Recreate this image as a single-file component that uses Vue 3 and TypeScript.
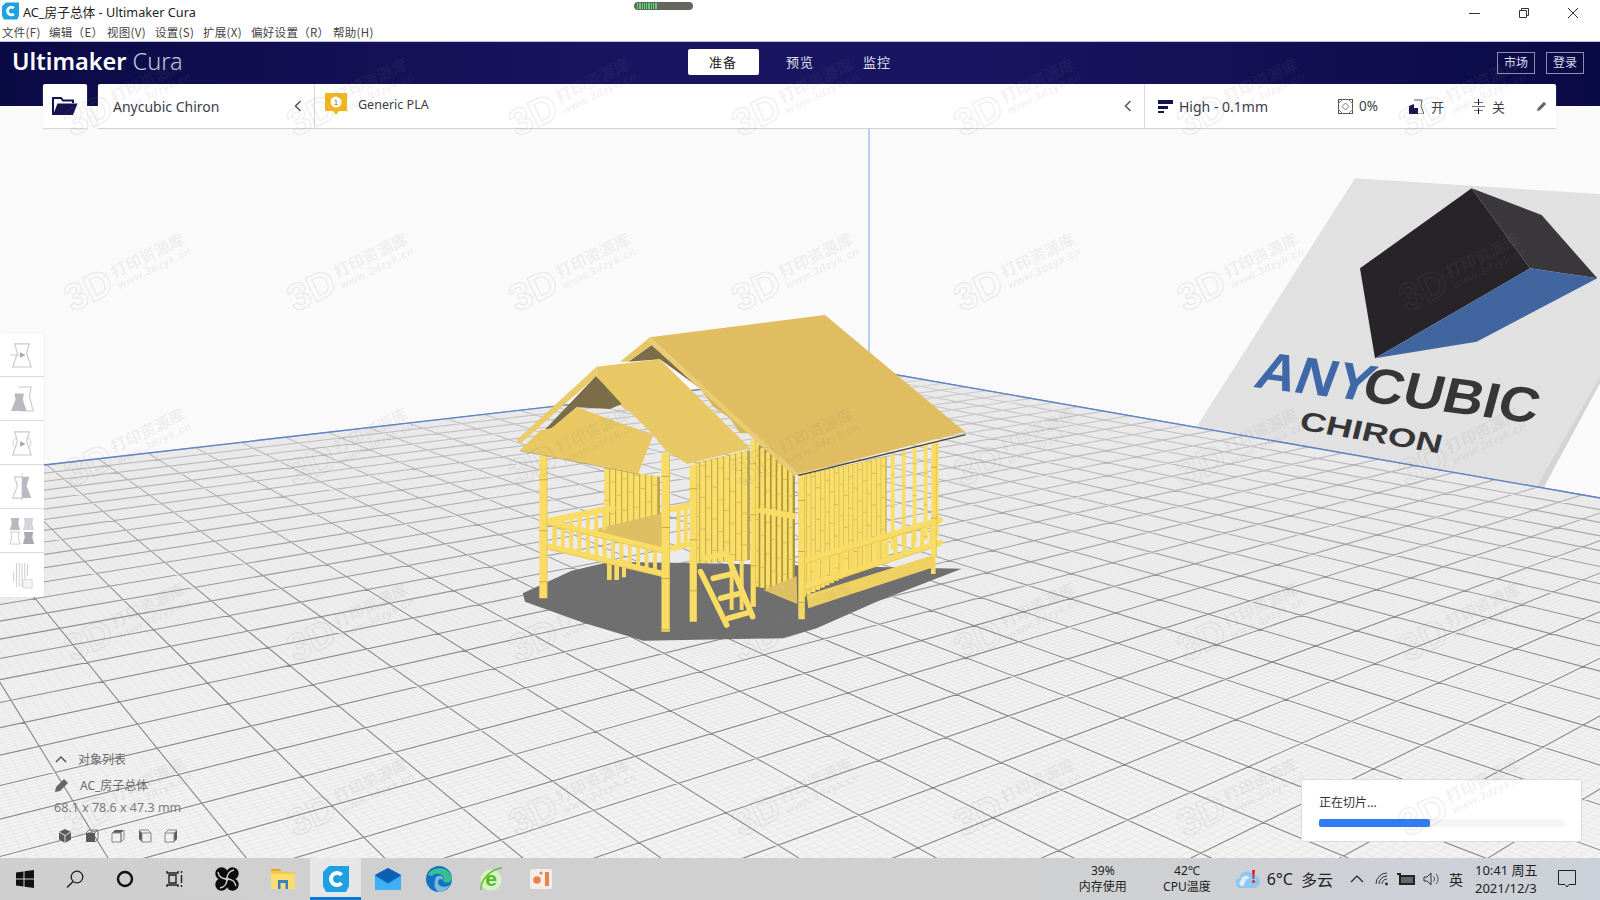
<template>
  <div class="app">
    <svg class="scene" viewBox="0 0 1600 900">
      <defs>
        <linearGradient id="fade" gradientUnits="userSpaceOnUse" x1="0" y1="370" x2="0" y2="640">
          <stop offset="0" stop-color="#eeeeee" stop-opacity="0.72" />
          <stop offset="1" stop-color="#eeeeee" stop-opacity="0" />
        </linearGradient>
      </defs>

      <!-- back plate with the logo -->
      <g transform="translate(1190 170) scale(0.3333)">
        <polygon points="495,25 1230,72 1230,640 1045,950 20,770" fill="#e1e1e2" />
        <polygon points="1230,620 1230,640 1060,955 1040,950" fill="#d4d4d5" />
        <polygon points="510,295 845,55 1020,295 555,565" fill="#272328" />
        <polygon points="845,55 1055,135 1222,325 1020,295" fill="#3a383c" />
        <polygon points="555,565 1020,295 1222,325 860,515" fill="#41659f" />
        <text class="plate-text" transform="matrix(1 0.13 -0.5 1.35 186 650)" font-size="112" textLength="345" lengthAdjust="spacingAndGlyphs" fill="#3f68a8">ANY</text>
        <text class="plate-text" transform="matrix(1 0.13 -0.35 1.3 510 692)" font-size="112" textLength="525" lengthAdjust="spacingAndGlyphs" fill="#363638">CUBIC</text>
        <text class="plate-text" transform="matrix(1 0.17 -0.25 1 325 778)" font-size="78" textLength="425" lengthAdjust="spacingAndGlyphs" fill="#363638">CHIRON</text>
      </g>

      <!-- floor -->
      <polygon :points="floorPoints" fill="#f2f2f2" />
      <path :d="minorPath" stroke="#dedede" stroke-width="0.45" fill="none" />
      <path :d="majorPath" stroke="#8a8a8a" stroke-width="1.1" fill="none" />
      <polygon :points="floorPoints" fill="url(#fade)" />
      <line x1="869" y1="128" x2="869" y2="370" stroke="#8db2e6" stroke-width="1.2" />
      <polyline points="0,470 869,370 1600,498" stroke="#5b86c6" stroke-width="1.3" fill="none" />

      <!-- the model, drawn in a 3x local space -->
      <g transform="translate(500 300) scale(0.3333)">
        <polygon points="68,880 215,812 330,785 600,790 1385,806 1130,905 950,985 850,1015 430,1022 250,968 75,905" fill="#6f6f6f" />
        <g v-for="(s, i) in stilts" :key="'st' + i">
          <line :x1="s.x" :y1="s.y1" :x2="s.x" :y2="s.y2" stroke="#f6d964" :stroke-width="s.w" />
        </g>
        <polygon points="315,505 480,530 480,660 315,680" fill="#c2a443" />
        <polygon points="585,490 750,450 750,780 585,790" fill="#c2a443" />
        <polygon points="760,420 885,520 885,880 760,860" fill="#b09439" />
        <polygon points="905,525 1160,470 1160,770 905,890" fill="#c8aa48" />
        <line v-for="(b, i) in wallBars" :key="'w' + i" :x1="b.x" :y1="b.y1" :x2="b.x" :y2="b.y2" stroke="#f8de6a" :stroke-width="b.w" />
        <line v-for="(b, i) in wallBars" :key="'n' + i" :x1="b.x" :y1="b.y1 + (i * 37) % 90" :x2="b.x" :y2="b.y2" stroke="#dcc055" :stroke-width="b.w" stroke-dasharray="3 92" />
        <polygon points="275,690 485,640 490,750" fill="#dcc063" />
        <polygon points="790,870 890,828 892,912" fill="#dcc063" />
        <polygon points="920,885 1300,765 1305,800 925,925" fill="#efd162" />
        <line v-for="(b, i) in balusters" :key="'b' + i" :x1="b.x1" :y1="b.y1" :x2="b.x2" :y2="b.y2" stroke="#f7da64" stroke-width="12" />
        <g stroke="#f8dc64" stroke-width="18" stroke-linecap="round">
          <line x1="138" y1="665" x2="490" y2="752" />
          <line x1="138" y1="738" x2="490" y2="822" />
          <line x1="140" y1="664" x2="338" y2="624" />
          <line x1="515" y1="628" x2="578" y2="615" />
          <line x1="515" y1="745" x2="578" y2="730" />
          <line x1="918" y1="782" x2="1320" y2="660" />
          <line x1="920" y1="860" x2="1320" y2="728" />
          <line x1="785" y1="632" x2="880" y2="648" />
        </g>
        <g stroke="#d5b64c" stroke-width="1.5">
          <line x1="138" y1="673" x2="490" y2="760" />
          <line x1="138" y1="746" x2="490" y2="830" />
          <line x1="918" y1="790" x2="1320" y2="668" />
          <line x1="920" y1="868" x2="1320" y2="736" />
        </g>
        <g v-for="(p, i) in posts" :key="'p' + i">
          <line :x1="p.x" :y1="p.y1" :x2="p.x" :y2="p.y2" stroke="#f8dc64" :stroke-width="p.w" />
          <line :x1="p.x + p.w / 2 - 1" :y1="p.y1" :x2="p.x + p.w / 2 - 1" :y2="p.y2" stroke="#cfb04a" stroke-width="1.5" />
          <line :x1="p.x" :y1="p.y1 + 70" :x2="p.x" :y2="p.y2" stroke="#c9ab48" :stroke-width="p.w + 2" stroke-dasharray="3 150" />
        </g>
        <g stroke="#f8dc64" stroke-width="17" stroke-linecap="round">
          <line x1="602" y1="815" x2="680" y2="975" />
          <line x1="680" y1="760" x2="758" y2="950" />
          <line x1="612" y1="775" x2="672" y2="762" />
          <line x1="640" y1="835" x2="695" y2="822" />
          <line x1="662" y1="895" x2="722" y2="880" />
          <line x1="685" y1="955" x2="745" y2="938" />
        </g>
        <polygon points="455,135 385,185 480,178 600,265" fill="#7c6d49" />
        <polygon points="600,265 640,300 745,400 720,400 690,355 640,320" fill="#d6b956" />
        <polygon points="450,112 360,185 385,185 455,135" fill="#e6c668" />
        <polygon points="450,112 975,45 1395,395 895,522" fill="#dfbd60" />
        <polygon points="450,112 895,522 882,528 445,125" fill="#ebcb70" />
        <line x1="895" y1="526" x2="1397" y2="404" stroke="#4a412a" stroke-width="3.5" />
        <polygon points="290,200 480,178 750,445 562,492 495,450 460,405 395,340 350,310 290,228" fill="#e8c765" />
        <polygon points="290,200 50,420 60,432 290,228" fill="#ebcb6a" />
        <polygon points="288,228 105,420 120,392 155,385 230,322 330,327 365,312" fill="#7c6d49" />
        <polygon points="230,322 460,405 415,520 60,450 120,392 155,385" fill="#e9c863" />
        <line x1="60" y1="452" x2="415" y2="522" stroke="#b89c45" stroke-width="2.5" />
      </g>
    </svg>

    <div class="titlebar">
      <div class="title-row">
        <svg class="app-icon" viewBox="0 0 18 18">
          <path d="M4 0H18V14L16 18H2L0 14V4Z" fill="#1fa0e2" />
          <path d="M12.5 6A4 4 0 1 0 12.5 12" stroke="#fff" stroke-width="3" fill="none" />
        </svg>
        <span class="title-text">AC_房子总体 - Ultimaker Cura</span>
        <div class="sys-pill"><i v-for="n in 9" :key="n"></i></div>
        <div class="win-btns">
          <svg viewBox="0 0 12 12"><path d="M0 6.5H11" stroke="#333" fill="none" /></svg>
          <svg viewBox="0 0 12 12"><path d="M1.5 3.5H8.5V10.5H1.5ZM3.5 3.5V1.5H10.5V8.5H8.5" stroke="#333" fill="none" /></svg>
          <svg viewBox="0 0 12 12"><path d="M1 1L11 11M11 1L1 11" stroke="#333" fill="none" /></svg>
        </div>
      </div>
      <div class="menu-row">
        <span v-for="m in menus" :key="m.label" class="menu-item" :style="{ width: m.w + 'px' }">{{ m.label }}</span>
      </div>
    </div>

    <div class="header">
      <div class="logo"><b>Ultimaker</b> <span>Cura</span></div>
      <div class="tabs">
        <span class="tab active">准备</span>
        <span class="tab">预览</span>
        <span class="tab">监控</span>
      </div>
      <div class="head-btns">
        <span class="head-btn">市场</span>
        <span class="head-btn">登录</span>
      </div>
    </div>

    <div class="toolbar">
      <div class="folder">
        <svg viewBox="0 0 26 20" width="26" height="20">
          <path d="M1 19V2H9L11 4.500H21V7" fill="none" stroke="#14124f" stroke-width="2" />
          <path d="M1 19L5.500 7.500H25.500L21 19Z" fill="#14124f" />
        </svg>
      </div>
      <div class="bar">
        <div class="machine">
          <span>Anycubic Chiron</span>
          <svg class="chev" viewBox="0 0 8 12"><path d="M6.500 1L1.500 6L6.500 11" stroke="#555" stroke-width="1.500" fill="none" /></svg>
        </div>
        <div class="material">
          <svg viewBox="0 0 22 22" width="22" height="22">
            <path d="M0 0H22V18H14L11 22L8 18H0Z" fill="#f3b71d" />
            <circle cx="11" cy="9" r="5.500" fill="#fff" />
            <text x="11" y="12" font-size="8" text-anchor="middle" fill="#8a6a10" font-family="Liberation Sans">1</text>
          </svg>
          <span class="mat-name">Generic PLA</span>
          <svg class="chev mat-chev" viewBox="0 0 8 12"><path d="M6.500 1L1.500 6L6.500 11" stroke="#555" stroke-width="1.500" fill="none" /></svg>
        </div>
        <div class="profile">
          <svg class="profile-ic" viewBox="0 0 15 15" width="15" height="15">
            <path d="M0 1H15V5H0ZM0 7H10V10H0ZM0 12H6V14H0Z" fill="#14124f" />
          </svg>
          <span class="prof-name">High - 0.1mm</span>
          <svg class="infill-ic" viewBox="0 0 15 15" width="15" height="15">
            <rect x="0.500" y="0.500" width="14" height="14" fill="#fff" stroke="#555" />
            <path d="M0 5L5 0M10 0L15 5M15 10L10 15M5 15L0 10M4 7.500L7.500 4L11 7.500L7.500 11Z" stroke="#777" fill="none" />
          </svg>
          <span class="pct">0%</span>
          <svg class="support-ic" viewBox="0 0 15 15" width="15" height="15">
            <path d="M0 15V7L5 5V9H9V15Z" fill="#14124f" />
            <path d="M5 1H13L12 7L15 15H9" stroke="#555" fill="none" />
          </svg>
          <span class="on">开</span>
          <svg class="adh-ic" viewBox="0 0 13 15" width="13" height="15">
            <path d="M0 7.500H13M2 3.500H11M2 11.500H11" stroke="#777" fill="none" />
            <path d="M6.500 0V6M6.500 9V15" stroke="#14124f" fill="none" />
          </svg>
          <span class="off">关</span>
          <svg class="pen-ic" viewBox="0 0 10 10" width="10" height="10">
            <path d="M0 10L0.800 7L7 0.800L9.200 3L3 9.200Z" fill="#666" />
          </svg>
        </div>
      </div>
    </div>

    <div class="workspace">
      <div class="tools">
        <div class="tool"><svg viewBox="0 0 26 30" width="24" height="28"><path :d="vase" fill="none" stroke="#c8c8ce" stroke-width="1.200" /><path d="M0 15H14" stroke="#c8c8ce" /><path d="M11 12L17 15L11 18Z" fill="#a8a8b0" /></svg></div>
        <div class="tool"><svg viewBox="0 0 26 30" width="24" height="28"><path d="M9 2H23L21 12L25 28H11" fill="none" stroke="#c8c8ce" stroke-width="1.200" /><path d="M5 9H15L14 16L18 28H1L6 16Z" fill="#b9b9c2" /></svg></div>
        <div class="tool"><svg viewBox="0 0 26 30" width="24" height="28"><path :d="vase" fill="none" stroke="#c8c8ce" stroke-width="1.200" /><path d="M8 9A6 6 0 0 0 5 19M18 9A6 6 0 0 1 21 19" stroke="#c8c8ce" fill="none" /><path d="M11 13L17 16L11 19Z" fill="#a8a8b0" /></svg></div>
        <div class="tool"><svg viewBox="0 0 26 30" width="24" height="28"><path d="M13 4H5L8 14L3 27H13" fill="none" stroke="#c8c8ce" stroke-width="1.200" /><path d="M13 4H21L18 14L23 27H13Z" fill="#b9b9c2" /><path d="M13 0V30" stroke="#c8c8ce" /></svg></div>
        <div class="tool"><svg viewBox="0 0 30 30" width="28" height="28">
          <path d="M3 1H12L11 7L13 14H2L4 7Z" fill="#b9b9c2" />
          <path d="M17 1H27L26 7L28 14H16L18 7Z" fill="#d6d6da" />
          <path d="M3 16H12L11 22L13 29H2L4 22Z" fill="none" stroke="#c8c8ce" />
          <path d="M17 16H27L26 22L28 29H16L18 22Z" fill="#a9a9b2" />
        </svg></div>
        <div class="tool"><svg viewBox="0 0 26 30" width="24" height="28">
          <path d="M4 22V12M7 28V2M10 28V2M13 28V2M16 20V2M19 16V3" stroke="#c8c8ce" fill="none" />
          <rect x="14" y="20" width="10" height="9" fill="#f4f4f6" stroke="#d6d6da" />
        </svg></div>
      </div>

      <div class="objects">
        <div class="obj-row">
          <svg class="obj-ic" viewBox="0 0 12 8" width="12" height="8"><path d="M1 7L6 2L11 7" stroke="#555" stroke-width="1.500" fill="none" /></svg>
          <span class="obj-head">对象列表</span>
        </div>
        <div class="obj-row name-row">
          <svg class="obj-ic" viewBox="0 0 14 14" width="14" height="14"><path d="M0 14L1 9L9 1L13 5L5 13Z" fill="#666" /></svg>
          <span class="obj-name">AC_房子总体</span>
        </div>
        <div class="obj-size">68.1 x 78.6 x 47.3 mm</div>
        <div class="cubes">
          <svg viewBox="0 0 14 14" width="14" height="14"><path d="M7 0L13 3V10.500L7 14L1 10.500V3Z" fill="#5a5a5e" /><path d="M1 3L7 6.500L13 3M7 6.500V14" stroke="#ddd" fill="none" /></svg>
          <svg viewBox="0 0 14 14" width="14" height="14"><path d="M1 4H10V13H1Z" fill="#5a5a5e" /><path d="M1 4L4 1H13V10L10 13M10 4L13 1" stroke="#777" fill="none" /></svg>
          <svg viewBox="0 0 14 14" width="14" height="14"><path d="M1 4L4 1H13L10 4Z" fill="#5a5a5e" /><path d="M1 4H10V13H1ZM10 4V13L13 10V1" stroke="#888" fill="none" /></svg>
          <svg viewBox="0 0 14 14" width="14" height="14"><path d="M1 1L4 4V13L1 10Z" fill="#5a5a5e" /><path d="M1 1H10L13 4V13H4V4H13" stroke="#888" fill="none" /></svg>
          <svg viewBox="0 0 14 14" width="14" height="14"><path d="M10 4L13 1V10L10 13Z" fill="#5a5a5e" /><path d="M1 4H10V13H1ZM1 4L4 1H13" stroke="#888" fill="none" /></svg>
        </div>
      </div>

      <div class="slice-card">
        <div class="slice-label">正在切片...</div>
        <div class="slice-track"><div class="slice-fill" :style="{ width: sliceProgress + '%' }"></div></div>
      </div>
    </div>

    <div class="taskbar">
      <div class="tb-icons">
        <div class="tile"><svg viewBox="0 0 18 18" width="18" height="18"><path d="M0 2.500L7.500 1.400V8.500H0ZM8.500 1.300L18 0V8.500H8.500ZM0 9.500H7.500V16.600L0 15.500ZM8.500 9.500H18V18L8.500 16.700Z" fill="#111" /></svg></div>
        <div class="tile"><svg viewBox="0 0 18 18" width="18" height="18"><circle cx="11" cy="7" r="5.800" stroke="#222" stroke-width="1.300" fill="none" /><path d="M7 11.500L1 17.500" stroke="#222" stroke-width="1.500" /></svg></div>
        <div class="tile"><svg viewBox="0 0 18 18" width="18" height="18"><circle cx="9" cy="9" r="7" stroke="#111" stroke-width="2.400" fill="none" /></svg></div>
        <div class="tile"><svg viewBox="0 0 18 18" width="18" height="18"><path d="M1 1V3H12V1M3 5H10V13H3ZM1 17V15H12V17M15.500 1V3M15.500 5V13M15.500 15V17" stroke="#222" stroke-width="1.400" fill="none" /></svg></div>
        <div class="tile fan-tile"><svg viewBox="0 0 24 24" width="24" height="24">
          <circle cx="6.500" cy="6.500" r="6.200" fill="#0b0b0b" />
          <circle cx="17.500" cy="6.500" r="6.200" fill="#0b0b0b" />
          <circle cx="17.500" cy="17.500" r="6.200" fill="#0b0b0b" />
          <circle cx="6.500" cy="17.500" r="6.200" fill="#0b0b0b" />
          <path d="M12 12C12 7 14 4 19 3M12 12C17 12 20 14 21 19M12 12C12 17 10 20 5 21M12 12C7 12 4 10 3 5" stroke="#d0d0d0" stroke-width="1.300" fill="none" />
        </svg></div>
        <div class="tile folder-tile"><svg viewBox="0 0 24 22" width="24" height="22">
          <path d="M0 2H9L11 4H24V21H0Z" fill="#f6c945" />
          <path d="M0 1H9L10 3H0Z" fill="#e0a828" />
          <path d="M0 6H24V21H0Z" fill="#fbdd72" />
          <rect x="7" y="12" width="10" height="9" fill="#3b7fc4" />
          <rect x="9.500" y="15" width="5" height="6" fill="#fbdd72" />
        </svg></div>
        <div class="tile active-tile"><svg viewBox="0 0 26 26" width="26" height="26">
          <path d="M6 0H26V20L23 26H3L0 20V6Z" fill="#1fa0e2" />
          <path d="M18.500 9A6 6 0 1 0 18.500 17" stroke="#fff" stroke-width="4" fill="none" />
        </svg></div>
        <div class="tile mail-tile"><svg viewBox="0 0 26 22" width="26" height="22">
          <path d="M0 7L13 0L26 7V22H0Z" fill="#1c8ce0" />
          <path d="M0 7L13 0L26 7L13 15Z" fill="#0b5fb0" />
          <path d="M0 8L13 16L26 8V22H0Z" fill="#3fb1f2" />
        </svg></div>
        <div class="tile edge-tile"><svg viewBox="0 0 26 26" width="26" height="26">
          <circle cx="13" cy="13" r="13" fill="#1273c4" />
          <path d="M2 9C5 1 22 -2 26 12C26 17 19 18 17 15C21 9 10 5 6 10Z" fill="#38c08f" />
          <path d="M9 14C10 8 18 9 17 14C14 12 12 13 12 17C13 21 19 22 24 19C21 24 16 26 13 26C8 23 8 18 9 14Z" fill="#d6f0f6" opacity="0.55" />
        </svg></div>
        <div class="tile ie-tile"><svg viewBox="0 0 24 26" width="24" height="26">
          <circle cx="12" cy="14" r="10.500" fill="#d9f3c2" />
          <text x="12" y="20" font-size="21" font-weight="700" text-anchor="middle" fill="#54b92c" font-family="Liberation Sans">e</text>
          <path d="M2 24C1 14 12 3 23 2" stroke="#62bf36" stroke-width="1.500" fill="none" />
        </svg></div>
        <div class="tile"><svg viewBox="0 0 22 20" width="22" height="20">
          <rect width="22" height="20" rx="2" fill="#f3ece8" />
          <circle cx="7" cy="11" r="3.800" fill="#e9824a" />
          <circle cx="11" cy="4" r="1.500" fill="#e9824a" />
          <rect x="15" y="3" width="4" height="14" fill="#e9824a" />
        </svg></div>
      </div>

      <div class="tray">
        <div class="stat"><span>39%</span><span>内存使用</span></div>
        <div class="stat"><span>42℃</span><span>CPU温度</span></div>
        <svg class="cloud" viewBox="0 0 24 20" width="24" height="20">
          <path d="M5 19A5 5 0 0 1 4 9A7 7 0 0 1 17 6A6.500 6.500 0 0 1 18 19Z" fill="#8fc6f0" />
          <path d="M5 17A3.500 3.500 0 0 1 5 11A5 5 0 0 1 14 9C10 10 8 13 8 17Z" fill="#dcedfa" />
          <path d="M16 1H19L18.200 10H16.800Z" fill="#e0222f" />
          <circle cx="17.500" cy="12.500" r="1.500" fill="#e0222f" />
        </svg>
        <span class="weather">6°C</span>
        <span class="weather cond">多云</span>
        <svg class="tray-ic up" viewBox="0 0 14 8" width="14" height="8"><path d="M1 7L7 1L13 7" stroke="#222" stroke-width="1.200" fill="none" /></svg>
        <svg class="tray-ic wifi" viewBox="0 0 14 14" width="14" height="14"><path d="M1 12A11 11 0 0 1 12 1M4 12A8 8 0 0 1 12 4M7 12A5 5 0 0 1 12 7" stroke="#333" fill="none" /><circle cx="11.500" cy="12" r="1.400" fill="#222" /></svg>
        <svg class="tray-ic batt" viewBox="0 0 18 12" width="18" height="12"><path d="M0 0H4V2H0ZM2 2H18V12H2Z" fill="#222" /><rect x="4" y="4" width="12" height="6" fill="#666" /></svg>
        <svg class="tray-ic vol" viewBox="0 0 16 14" width="16" height="14"><path d="M1 5H4L8 1V13L4 9H1Z" stroke="#333" fill="none" /><path d="M10.500 4.500A3.500 3.500 0 0 1 10.500 9.500M13 2A7 7 0 0 1 13 12" stroke="#555" fill="none" /></svg>
        <span class="ime">英</span>
        <div class="clock"><span>10:41 周五</span><span>2021/12/3</span></div>
        <svg class="notice" viewBox="0 0 18 18" width="18" height="18"><path d="M0.500 0.500H17.500V14.500H11L9 17L7 14.500H0.500Z" stroke="#222" fill="none" /></svg>
      </div>
    </div>

    <div class="marks">
      <div v-for="m in marks" :key="m.id" class="mark" :style="{ left: m.x + 'px', top: m.y + 'px' }">
        <span class="mark-3d">3D</span>
        <span class="mark-text"><b>打印资源库</b><i>www.3dzyk.cn</i></span>
      </div>
    </div>
  </div>
</template>

<script setup lang="ts">
type Pt = [number, number]
type Bar = { x: number; y1: number; y2: number; w: number }

const menus = [
  { label: '文件(F)', w: 47 },
  { label: '编辑（E）', w: 58 },
  { label: '视图(V)', w: 48 },
  { label: '设置(S)', w: 48 },
  { label: '扩展(X)', w: 48 },
  { label: '偏好设置（R）', w: 82 },
  { label: '帮助(H)', w: 48 },
]

const sliceProgress = 45.5
const vase = 'M5 3H21L18 13L23 28H3L8 13Z'

// floor grid: two vanishing points and the far corner of the build plate
const corner: Pt = [869, 370]
const vpLeft: Pt = [-320, 162]
const vpRight: Pt = [2600, 170]
const stepU = 0.015
const stepV = 0.014
const limit = 0.92

function project(u: number, v: number): Pt {
  const a = stepU * u
  const b = stepV * v
  const den = 1 - a - b
  return [
    (corner[0] - a * vpLeft[0] - b * vpRight[0]) / den,
    (corner[1] - a * vpLeft[1] - b * vpRight[1]) / den,
  ]
}

function gridPath(step: number): string {
  let d = ''
  for (let u = 0; stepU * u < limit; u += step) {
    const p = project(u, 0)
    const q = project(u, (limit - stepU * u) / stepV)
    d += `M${p[0].toFixed(1)} ${p[1].toFixed(1)}L${q[0].toFixed(1)} ${q[1].toFixed(1)}`
  }
  for (let v = 0; stepV * v < limit; v += step) {
    const p = project(0, v)
    const q = project((limit - stepV * v) / stepU, v)
    d += `M${p[0].toFixed(1)} ${p[1].toFixed(1)}L${q[0].toFixed(1)} ${q[1].toFixed(1)}`
  }
  return d
}

const majorPath = gridPath(1)
const minorPath = gridPath(0.1)
const floorPoints = '869,370 1600,498 1600,900 0,900 0,470'

// bamboo walls of the house
function wall(x0: number, x1: number, step: number, t0: number, t1: number, b0: number, b1: number, w: number): Bar[] {
  const out: Bar[] = []
  for (let x = x0; x <= x1; x += step) {
    const k = (x - x0) / (x1 - x0)
    out.push({ x, y1: t0 + (t1 - t0) * k, y2: b0 + (b1 - b0) * k, w })
  }
  return out
}

const wallBars: Bar[] = [
  ...wall(320, 478, 18, 505, 530, 680, 660, 15),
  ...wall(590, 748, 18, 490, 450, 790, 780, 15),
  ...wall(770, 880, 17, 430, 515, 860, 880, 12),
  ...wall(912, 1160, 14, 525, 470, 890, 770, 12.5),
  ...wall(1178, 1310, 33, 462, 428, 750, 710, 12),
]

const stilts: Bar[] = [
  { x: 328, y1: 780, y2: 840, w: 14 },
  { x: 350, y1: 780, y2: 840, w: 14 },
  { x: 372, y1: 780, y2: 832, w: 12 },
  { x: 695, y1: 780, y2: 930, w: 12 },
  { x: 725, y1: 780, y2: 930, w: 12 },
  { x: 1300, y1: 760, y2: 822, w: 14 },
]

const posts: Bar[] = [
  { x: 130, y1: 468, y2: 895, w: 24 },
  { x: 497, y1: 458, y2: 995, w: 25 },
  { x: 580, y1: 495, y2: 965, w: 22 },
  { x: 760, y1: 420, y2: 920, w: 16 },
  { x: 905, y1: 530, y2: 958, w: 20 },
  { x: 1302, y1: 430, y2: 770, w: 16 },
]

function rail(x0: number, y0: number, x1: number, y1: number, gap: number, count: number) {
  const out = []
  for (let i = 1; i < count; i++) {
    const k = i / count
    const x = x0 + (x1 - x0) * k
    const y = y0 + (y1 - y0) * k
    out.push({ x1: x, y1: y, x2: x, y2: y + gap })
  }
  return out
}

const balusters = [
  ...rail(138, 665, 490, 752, 72, 14),
  ...rail(920, 782, 1320, 660, 72, 15),
  ...rail(140, 664, 338, 624, 60, 8),
  ...rail(515, 628, 578, 615, 115, 3),
]

// watermark repeats across the whole window
const marks: { id: number; x: number; y: number }[] = []
for (let r = 0; r < 5; r++) {
  for (let c = 0; c < 7; c++) {
    marks.push({ id: r * 10 + c, x: 125 + c * 222.5, y: 97 + r * 175 })
  }
}
</script>

<style scoped>
.app {
  position: relative;
  width: 1600px;
  height: 900px;
  display: flex;
  flex-direction: column;
  overflow: hidden;
  background: #fafafa;
  font-family: "Noto Sans", "Noto Sans CJK SC", sans-serif;
  color: #333;
}
.scene {
  position: absolute;
  left: 0;
  top: 0;
  width: 1600px;
  height: 900px;
}
.plate-text {
  font-family: "Liberation Sans", sans-serif;
  font-weight: 700;
}
.titlebar {
  position: relative;
  height: 41px;
  background: #fff;
  flex: none;
}
.title-row {
  position: relative;
  height: 22px;
  display: flex;
  align-items: center;
}
.app-icon {
  width: 17px;
  height: 18px;
  margin-left: 2px;
}
.title-text {
  margin-left: 4px;
  font-size: 12.700px;
  color: #222;
  font-family: "Noto Sans", "Noto Sans CJK SC", sans-serif;
}
.sys-pill {
  position: absolute;
  left: 634px;
  top: 2px;
  width: 59px;
  height: 8px;
  border-radius: 4px;
  background: #666661;
  display: flex;
  gap: 1px;
  padding: 1px 0 0 3px;
  box-sizing: border-box;
}
.sys-pill i {
  width: 1.300px;
  height: 6px;
  background: #57d668;
}
.win-btns {
  margin-left: auto;
  display: flex;
  gap: 37px;
  padding-right: 21px;
  padding-top: 3px;
}
.win-btns svg {
  width: 12px;
  height: 12px;
}
.menu-row {
  display: flex;
  padding-left: 2px;
  height: 19px;
  align-items: center;
  font-size: 11.500px;
  letter-spacing: 0.300px;
  color: #444;
  font-family: "Noto Sans CJK SC", sans-serif;
}
.menu-item {
  white-space: nowrap;
}
.header {
  position: relative;
  height: 65px;
  flex: none;
  box-sizing: border-box;
  border-top: 1px solid #b9c2dc;
  padding-bottom: 24px;
  display: grid;
  grid-template-columns: 1fr auto 1fr;
  align-items: center;
  background: linear-gradient(90deg, #0a0a45 0%, #1a1560 40%, #1a1560 60%, #0a0a45 100%);
  color: #fff;
}
.logo {
  padding-left: 12px;
  font-size: 23.500px;
  line-height: 1;
  white-space: nowrap;
}
.logo b {
  font-weight: 600;
}
.logo span {
  font-weight: 300;
  color: #c3c6dc;
}
.tabs {
  display: flex;
  gap: 6px;
}
.tab {
  width: 71px;
  height: 26px;
  line-height: 26px;
  text-align: center;
  font-size: 13px;
  letter-spacing: 1px;
  color: #dfe0ee;
  border-radius: 2px;
}
.tab.active {
  background: #fff;
  color: #222;
}
.head-btns {
  display: flex;
  justify-content: flex-end;
  gap: 11px;
  padding-right: 16px;
  margin-top: 2px;
}
.head-btn {
  width: 38px;
  height: 22px;
  box-sizing: border-box;
  border: 1px solid #8e8eb0;
  font-size: 12px;
  line-height: 20px;
  text-align: center;
  color: #dcdcec;
}
.toolbar {
  position: relative;
  flex: none;
  display: flex;
  height: 44px;
  margin-top: -22px;
  padding-left: 43px;
}
.folder {
  width: 44px;
  background: #fff;
  display: flex;
  align-items: center;
  justify-content: center;
  box-shadow: 0 1px 1px #d4d4d4;
  border-radius: 2px 2px 0 0;
}
.bar {
  margin-left: 11px;
  width: 1458px;
  background: #fff;
  display: flex;
  box-shadow: 0 1px 1px #cfcfcf;
  border-radius: 2px 2px 0 0;
  font-size: 14px;
  color: #3c3c48;
}
.machine {
  width: 217px;
  box-sizing: border-box;
  border-right: 1px solid #d8d8d8;
  display: flex;
  align-items: center;
  padding: 0 12px 0 15px;
  justify-content: space-between;
}
.chev {
  width: 8px;
  height: 12px;
}
.material {
  width: 830px;
  box-sizing: border-box;
  border-right: 1px solid #d8d8d8;
  display: flex;
  align-items: center;
  padding: 0 12px 4px 10px;
}
.mat-name {
  margin-left: 11px;
  font-size: 12.500px;
}
.mat-chev {
  margin-left: auto;
  margin-top: 4px;
}
.profile {
  flex: 1;
  display: flex;
  align-items: center;
  padding-left: 13px;
}
.prof-name {
  margin-left: 6px;
  width: 159px;
}
.pct {
  margin-left: 6px;
  width: 50px;
  font-size: 13.500px;
}
.on {
  margin-left: 7px;
  width: 41px;
  font-size: 13px;
}
.off {
  margin-left: 7px;
  width: 45px;
  font-size: 13px;
}
.workspace {
  position: relative;
  flex: 1;
}
.tools {
  position: absolute;
  left: 0;
  top: 205px;
  width: 44px;
  background: #fff;
  border-radius: 0 2px 2px 0;
  box-shadow: 0 0 1px #bbb;
}
.tool {
  height: 44px;
  box-sizing: border-box;
  border-bottom: 1px solid #dcdcdc;
  display: flex;
  align-items: center;
  justify-content: center;
}
.tool:last-child {
  border-bottom: none;
}
.objects {
  position: absolute;
  left: 54px;
  top: 622px;
  font-size: 12px;
  color: #6b6b6b;
}
.obj-row {
  display: flex;
  align-items: center;
  height: 18px;
}
.name-row {
  margin-top: 8px;
}
.obj-ic {
  margin-left: 1px;
}
.obj-head {
  margin-left: 11px;
}
.obj-name {
  margin-left: 11px;
}
.obj-size {
  margin-top: 5px;
  font-size: 12.500px;
  color: #7a7a7a;
  line-height: 18px;
}
.cubes {
  display: flex;
  gap: 12.500px;
  margin-top: 12px;
  padding-left: 4px;
}
.slice-card {
  position: absolute;
  left: 1301px;
  top: 651px;
  width: 281px;
  height: 63px;
  box-sizing: border-box;
  background: #fff;
  border: 1px solid #dcdcdc;
  border-radius: 3px;
  padding: 14px 17px 0;
}
.slice-label {
  font-size: 12px;
  line-height: 18px;
  color: #333;
}
.slice-track {
  margin-top: 7px;
  height: 8px;
  border-radius: 2px;
  background: #f5f5f5;
}
.slice-fill {
  height: 8px;
  border-radius: 2px;
  background: #2f7cf2;
}
.taskbar {
  position: relative;
  flex: none;
  height: 42px;
  display: flex;
  align-items: stretch;
  background: linear-gradient(90deg, #cfcfcf 0%, #d0d0d0 60%, #ccd0d8 100%);
}
.tb-icons {
  display: flex;
}
.tile {
  width: 50px;
  display: flex;
  align-items: center;
  justify-content: center;
  box-sizing: border-box;
}
.fan-tile {
  margin-left: 2px;
}
.folder-tile {
  margin-left: 6px;
}
.active-tile {
  background: #e4e6e8;
  border-bottom: 3px solid #0a78d4;
  padding-top: 3px;
  width: 51px;
  margin-left: 2px;
}
.mail-tile {
  margin-left: 2px;
}
.edge-tile {
  margin-left: 1px;
}
.ie-tile {
  margin-left: 2px;
}
.tray {
  margin-left: auto;
  display: flex;
  align-items: center;
  padding-right: 24px;
  color: #222;
}
.stat {
  display: flex;
  flex-direction: column;
  align-items: center;
  width: 84px;
  font-size: 12px;
  line-height: 16px;
}
.cloud {
  margin-left: 7px;
}
.weather {
  margin-left: 7px;
  font-size: 16px;
}
.cond {
  margin-left: 8px;
}
.tray-ic {
  flex: none;
}
.up {
  margin-left: 17px;
}
.wifi {
  margin-left: 11px;
}
.batt {
  margin-left: 8px;
}
.vol {
  margin-left: 8px;
}
.ime {
  margin-left: 10px;
  font-size: 14px;
}
.clock {
  margin-left: 12px;
  display: flex;
  flex-direction: column;
  font-size: 13px;
  line-height: 18px;
  width: 66px;
  white-space: nowrap;
}
.notice {
  margin-left: 17px;
}
.marks {
  position: absolute;
  inset: 0;
  pointer-events: none;
  overflow: hidden;
}
.mark {
  position: absolute;
  width: 130px;
  height: 40px;
  margin: -20px 0 0 -65px;
  display: flex;
  align-items: center;
  transform: rotate(-26deg);
  color: rgba(125, 125, 125, 0.11);
  white-space: nowrap;
}
.mark-3d {
  font: 700 38px/40px "Liberation Sans", sans-serif;
  color: transparent;
  -webkit-text-stroke: 1.500px rgba(125, 125, 125, 0.12);
}
.mark-text {
  display: flex;
  flex-direction: column;
  margin-left: 4px;
}
.mark-text b {
  font: 700 16px/18px "Noto Sans CJK SC", sans-serif;
}
.mark-text i {
  font: italic 700 11px/12px "Liberation Sans", sans-serif;
  letter-spacing: 0.500px;
}
</style>

<style>
html, body {
  margin: 0;
  background: #fafafa;
}
</style>
